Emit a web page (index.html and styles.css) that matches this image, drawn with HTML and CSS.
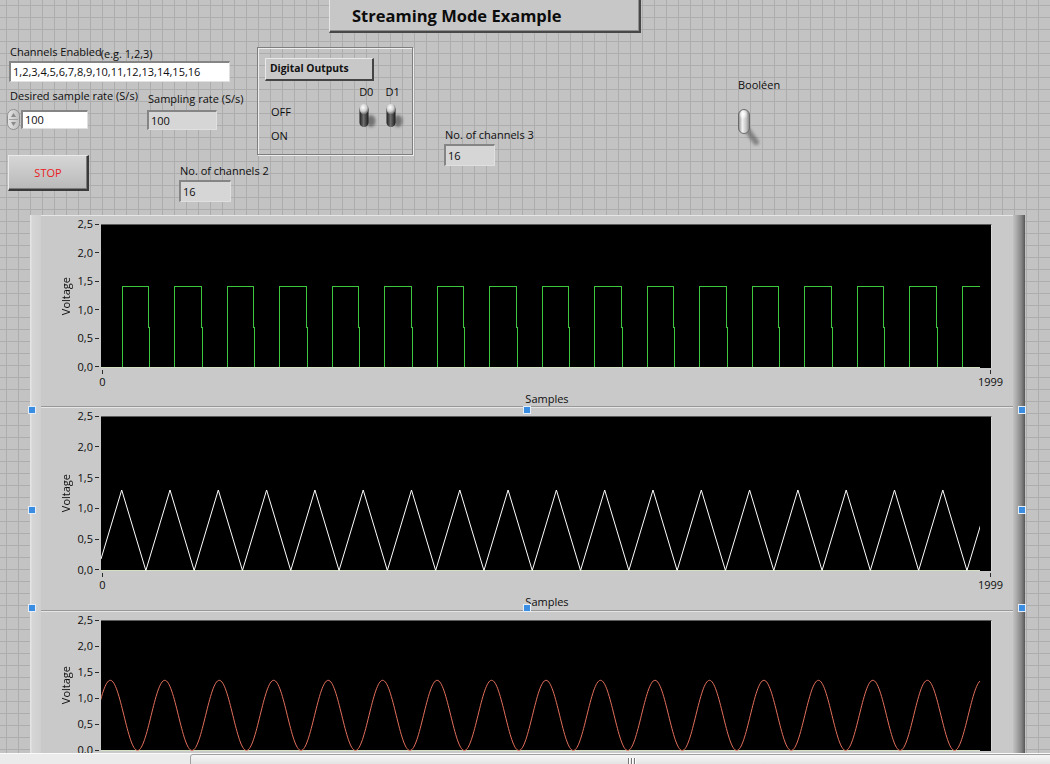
FILE: index.html
```html
<!DOCTYPE html>
<html lang="fr">
<head>
<meta charset="utf-8">
<title>Streaming Mode Example</title>
<link rel="stylesheet" href="styles.css">
</head>
<body>
<div class="window">
  <div class="panel">
    <div class="canvas">
      <svg class="defs" width="0" height="0" aria-hidden="true">
        <defs>
          <linearGradient id="tgBody" x1="0" x2="1" y1="0" y2="0">
            <stop offset="0" stop-color="#1c1c1c"/>
            <stop offset=".45" stop-color="#707070"/>
            <stop offset="1" stop-color="#181818"/>
          </linearGradient>
          <radialGradient id="tgKnob" cx=".4" cy=".35" r=".7">
            <stop offset="0" stop-color="#ffffff"/>
            <stop offset=".55" stop-color="#cfcfcf"/>
            <stop offset="1" stop-color="#5e5e5e"/>
          </radialGradient>
          <linearGradient id="lvBody" x1="0" x2="1" y1="0" y2="0">
            <stop offset="0" stop-color="#8c8c8c"/>
            <stop offset=".35" stop-color="#f2f2f2"/>
            <stop offset=".7" stop-color="#c4c4c4"/>
            <stop offset="1" stop-color="#808080"/>
          </linearGradient>
          <radialGradient id="lvKnob" cx=".45" cy=".4" r=".6">
            <stop offset="0" stop-color="#ffffff"/>
            <stop offset="1" stop-color="#ffffff" stop-opacity="0"/>
          </radialGradient>
          <linearGradient id="spinG" x1="0" x2="1" y1="0" y2="0">
            <stop offset="0" stop-color="#e6e6e6"/>
            <stop offset="1" stop-color="#bdbdbd"/>
          </linearGradient>
          <filter id="blurA" x="-1" y="-1" width="3" height="3"><feGaussianBlur stdDeviation="1.6"/></filter>
        </defs>
      </svg>

      <div class="title">Streaming Mode Example</div>

      <div class="ctl ctl-channels">
        <div class="lbl-row"><span class="lbl">Channels Enabled</span><span class="lbl eg">(e.g. 1,2,3)</span></div>
        <div class="field field-white f-string">1,2,3,4,5,6,7,8,9,10,11,12,13,14,15,16</div>
      </div>

      <div class="ctl ctl-desired">
        <div class="lbl">Desired sample rate (S/s)</div>
        <div class="num-row">
          <svg class="spinner" width="13" height="21" viewBox="0 0 13 21">
            <rect x=".5" y=".5" width="12" height="20" rx="6" fill="url(#spinG)" stroke="#8e8e8e"/>
            <line x1="2" y1="10.5" x2="11" y2="10.5" stroke="#a0a0a0"/>
            <path d="M6.5 4 L9 8 H4 Z" fill="#8a8a8a"/>
            <path d="M6.5 17 L9 13 H4 Z" fill="#8a8a8a"/>
          </svg>
          <div class="field field-white f-num">100</div>
        </div>
      </div>

      <div class="ctl ctl-sampling">
        <div class="lbl">Sampling rate (S/s)</div>
        <div class="field field-ind f-rate">100</div>
      </div>

      <button class="stop" type="button">STOP</button>

      <div class="ctl ctl-ch2">
        <div class="lbl">No. of channels 2</div>
        <div class="field field-ind f-ch">16</div>
      </div>

      <div class="do-frame">
        <div class="do-btn">Digital Outputs</div>
        <div class="do-row">
          <div class="do-states"><span>OFF</span><span class="on">ON</span></div>
          <div class="do-sw">
            <span>D0</span>
            <svg class="toggle" width="20" height="28" viewBox="0 0 20 28">
              <ellipse cx="12" cy="19" rx="4.5" ry="6" fill="#333" opacity=".55" filter="url(#blurA)"/>
              <rect x=".5" y="3" width="9" height="22" rx="4.5" fill="url(#tgBody)"/>
              <ellipse cx="5" cy="7" rx="4.5" ry="5.2" fill="url(#tgKnob)"/>
            </svg>
          </div>
          <div class="do-sw">
            <span>D1</span>
            <svg class="toggle" width="20" height="28" viewBox="0 0 20 28">
              <ellipse cx="12" cy="19" rx="4.5" ry="6" fill="#333" opacity=".55" filter="url(#blurA)"/>
              <rect x=".5" y="3" width="9" height="22" rx="4.5" fill="url(#tgBody)"/>
              <ellipse cx="5" cy="7" rx="4.5" ry="5.2" fill="url(#tgKnob)"/>
            </svg>
          </div>
        </div>
      </div>

      <div class="ctl ctl-ch3">
        <div class="lbl">No. of channels 3</div>
        <div class="field field-ind f-ch f-ch3">16</div>
      </div>

      <div class="ctl ctl-bool">
        <div class="lbl">Booléen</div>
        <svg class="lever" width="26" height="40" viewBox="0 0 26 40">
          <path d="M9 20 L20 35" stroke="#444" stroke-width="6" stroke-linecap="round" opacity=".5" filter="url(#blurA)"/>
          <rect x="2.5" y="2.5" width="11" height="24" rx="5.5" fill="url(#lvBody)" stroke="#6a6a6a"/>
          <ellipse cx="7.5" cy="8" rx="4" ry="4.5" fill="url(#lvKnob)"/>
        </svg>
      </div>
    </div>

    <div class="graphs">
      <div class="g-left"></div>
      <div class="g-stack">
        <div class="graph g1">
          <div class="yaxis">
            <span class="ylabel">Voltage</span>
            <div class="yticks"><span>2,5</span><span>2,0</span><span>1,5</span><span>1,0</span><span>0,5</span><span>0,0</span></div>
          </div>
          <div class="plot">
            <svg width="879" height="143" viewBox="0 0 879 143">
              <path class="tr-sq" d="M0,142.5H21.3
                V61.7h26.4V102h1V142.5h25.1
                V61.7h26.4V102h1V142.5h25.1
                V61.7h26.4V102h1V142.5h25.1
                V61.7h26.4V102h1V142.5h25.1
                V61.7h26.4V102h1V142.5h25.1
                V61.7h26.4V102h1V142.5h25.1
                V61.7h26.4V102h1V142.5h25.1
                V61.7h26.4V102h1V142.5h25.1
                V61.7h26.4V102h1V142.5h25.1
                V61.7h26.4V102h1V142.5h25.1
                V61.7h26.4V102h1V142.5h25.1
                V61.7h26.4V102h1V142.5h25.1
                V61.7h26.4V102h1V142.5h25.1
                V61.7h26.4V102h1V142.5h25.1
                V61.7h26.4V102h1V142.5h25.1
                V61.7h26.4V102h1V142.5h25.1
                V61.7H879"/>
              <line class="zero" x1="0" y1="142.5" x2="879" y2="142.5"/>
            </svg>
          </div>
          <div class="xaxis">
            <div class="xticks"><span class="xt">0</span><span class="xt">1999</span></div>
            <div class="xtitle">Samples</div>
          </div>
        </div>

        <div class="graph g2">
          <div class="yaxis">
            <span class="ylabel">Voltage</span>
            <div class="yticks"><span>2,5</span><span>2,0</span><span>1,5</span><span>1,0</span><span>0,5</span><span>0,0</span></div>
          </div>
          <div class="plot">
            <svg width="879" height="154" viewBox="0 0 879 154">
              <line class="zero" x1="0" y1="153.5" x2="879" y2="153.5"/>
              <path class="tr-tri" d="M0,142L20.7,73
                l24.15,80.5l24.15,-80.5
                l24.15,80.5l24.15,-80.5
                l24.15,80.5l24.15,-80.5
                l24.15,80.5l24.15,-80.5
                l24.15,80.5l24.15,-80.5
                l24.15,80.5l24.15,-80.5
                l24.15,80.5l24.15,-80.5
                l24.15,80.5l24.15,-80.5
                l24.15,80.5l24.15,-80.5
                l24.15,80.5l24.15,-80.5
                l24.15,80.5l24.15,-80.5
                l24.15,80.5l24.15,-80.5
                l24.15,80.5l24.15,-80.5
                l24.15,80.5l24.15,-80.5
                l24.15,80.5l24.15,-80.5
                l24.15,80.5l24.15,-80.5
                l24.15,80.5l24.15,-80.5
                l24.15,80.5l24.15,-80.5"/>
            </svg>
          </div>
          <div class="xaxis">
            <div class="xticks"><span class="xt">0</span><span class="xt">1999</span></div>
            <div class="xtitle">Samples</div>
          </div>
        </div>

        <div class="graph g3">
          <div class="yaxis">
            <span class="ylabel">Voltage</span>
            <div class="yticks"><span>2,5</span><span>2,0</span><span>1,5</span><span>1,0</span><span>0,5</span><span>0,0</span></div>
          </div>
          <div class="plot">
            <svg width="879" height="130" viewBox="0 0 879 130">
              <line class="zero" x1="0" y1="129.5" x2="879" y2="129.5"/>
              <path class="tr-sin" d="M-4.3175,94.4c4.441,-17.98 8.689,-35.1 13.6175,-35.1
                c4.9285,0 9.1765,17.12 13.6175,35.1c4.441,17.98 8.689,35.1 13.6175,35.1c4.9285,0 9.1765,-17.12 13.6175,-35.1c4.441,-17.98 8.689,-35.1 13.6175,-35.1
                c4.9285,0 9.1765,17.12 13.6175,35.1c4.441,17.98 8.689,35.1 13.6175,35.1c4.9285,0 9.1765,-17.12 13.6175,-35.1c4.441,-17.98 8.689,-35.1 13.6175,-35.1
                c4.9285,0 9.1765,17.12 13.6175,35.1c4.441,17.98 8.689,35.1 13.6175,35.1c4.9285,0 9.1765,-17.12 13.6175,-35.1c4.441,-17.98 8.689,-35.1 13.6175,-35.1
                c4.9285,0 9.1765,17.12 13.6175,35.1c4.441,17.98 8.689,35.1 13.6175,35.1c4.9285,0 9.1765,-17.12 13.6175,-35.1c4.441,-17.98 8.689,-35.1 13.6175,-35.1
                c4.9285,0 9.1765,17.12 13.6175,35.1c4.441,17.98 8.689,35.1 13.6175,35.1c4.9285,0 9.1765,-17.12 13.6175,-35.1c4.441,-17.98 8.689,-35.1 13.6175,-35.1
                c4.9285,0 9.1765,17.12 13.6175,35.1c4.441,17.98 8.689,35.1 13.6175,35.1c4.9285,0 9.1765,-17.12 13.6175,-35.1c4.441,-17.98 8.689,-35.1 13.6175,-35.1
                c4.9285,0 9.1765,17.12 13.6175,35.1c4.441,17.98 8.689,35.1 13.6175,35.1c4.9285,0 9.1765,-17.12 13.6175,-35.1c4.441,-17.98 8.689,-35.1 13.6175,-35.1
                c4.9285,0 9.1765,17.12 13.6175,35.1c4.441,17.98 8.689,35.1 13.6175,35.1c4.9285,0 9.1765,-17.12 13.6175,-35.1c4.441,-17.98 8.689,-35.1 13.6175,-35.1
                c4.9285,0 9.1765,17.12 13.6175,35.1c4.441,17.98 8.689,35.1 13.6175,35.1c4.9285,0 9.1765,-17.12 13.6175,-35.1c4.441,-17.98 8.689,-35.1 13.6175,-35.1
                c4.9285,0 9.1765,17.12 13.6175,35.1c4.441,17.98 8.689,35.1 13.6175,35.1c4.9285,0 9.1765,-17.12 13.6175,-35.1c4.441,-17.98 8.689,-35.1 13.6175,-35.1
                c4.9285,0 9.1765,17.12 13.6175,35.1c4.441,17.98 8.689,35.1 13.6175,35.1c4.9285,0 9.1765,-17.12 13.6175,-35.1c4.441,-17.98 8.689,-35.1 13.6175,-35.1
                c4.9285,0 9.1765,17.12 13.6175,35.1c4.441,17.98 8.689,35.1 13.6175,35.1c4.9285,0 9.1765,-17.12 13.6175,-35.1c4.441,-17.98 8.689,-35.1 13.6175,-35.1
                c4.9285,0 9.1765,17.12 13.6175,35.1c4.441,17.98 8.689,35.1 13.6175,35.1c4.9285,0 9.1765,-17.12 13.6175,-35.1c4.441,-17.98 8.689,-35.1 13.6175,-35.1
                c4.9285,0 9.1765,17.12 13.6175,35.1c4.441,17.98 8.689,35.1 13.6175,35.1c4.9285,0 9.1765,-17.12 13.6175,-35.1c4.441,-17.98 8.689,-35.1 13.6175,-35.1
                c4.9285,0 9.1765,17.12 13.6175,35.1c4.441,17.98 8.689,35.1 13.6175,35.1c4.9285,0 9.1765,-17.12 13.6175,-35.1c4.441,-17.98 8.689,-35.1 13.6175,-35.1
                c4.9285,0 9.1765,17.12 13.6175,35.1c4.441,17.98 8.689,35.1 13.6175,35.1c4.9285,0 9.1765,-17.12 13.6175,-35.1c4.441,-17.98 8.689,-35.1 13.6175,-35.1
                c4.9285,0 9.1765,17.12 13.6175,35.1c4.441,17.98 8.689,35.1 13.6175,35.1c4.9285,0 9.1765,-17.12 13.6175,-35.1c4.441,-17.98 8.689,-35.1 13.6175,-35.1"/>
            </svg>
          </div>
        </div>
      </div>
      <div class="g-bevel"></div>
    </div>

    <span class="handle h-tl"></span>
    <span class="handle h-tc"></span>
    <span class="handle h-tr"></span>
    <span class="handle h-ml"></span>
    <span class="handle h-mr"></span>
    <span class="handle h-bl"></span>
    <span class="handle h-bc"></span>
    <span class="handle h-br"></span>
  </div>

  <div class="hscroll">
    <div class="thumb"><i></i><i></i><i></i></div>
  </div>
</div>
</body>
</html>
```

FILE: styles.css
```css
* { box-sizing: border-box; }

html, body {
  margin: 0;
  padding: 0;
}

body {
  width: 1050px;
  height: 764px;
  overflow: hidden;
  background: #c3c3c3;
  font-family: "Open Sans", "Liberation Sans", sans-serif;
  font-size: 11px;
  line-height: 15px;
  color: #0e0e0e;
}

.panel {
  position: relative;
  height: 753px;
  overflow: hidden;
  background-color: #c3c3c3;
  background-image:
    linear-gradient(#adadad 1px, transparent 1px),
    linear-gradient(90deg, #adadad 1px, transparent 1px);
  background-size: 12px 12px;
  background-position: 6px 5px;
}

/* ---------- front panel canvas ---------- */
.canvas {
  position: relative;
  height: 215px;
}

.defs {
  display: block;
  width: 0;
  height: 0;
}

.title {
  position: absolute;
  left: 329px;
  top: 0;
  width: 312px;
  height: 33px;
  padding-left: 22px;
  background: #c7c7c7;
  border-left: 1px solid #e6e6e6;
  border-right: 2px solid #474747;
  border-bottom: 2px solid #474747;
  box-shadow: inset -1px -1px 0 #8e8e8e;
  font-weight: 700;
  font-size: 16.5px;
  line-height: 31px;
  color: #0c0c0c;
}

.ctl {
  position: absolute;
  display: flex;
  flex-direction: column;
  align-items: flex-start;
}

.lbl { padding-left: 1px; white-space: nowrap; }

.lbl-row { display: flex; }
.eg { margin-top: 2px; margin-left: -1px; padding-left: 0; }

.ctl-channels { left: 9px; top: 44px; }
.ctl-desired { left: 7px; top: 88px; }
.ctl-desired .lbl { padding-left: 3px; }
.ctl-desired .num-row { margin-top: 6px; }
.ctl-sampling { left: 147px; top: 91px; }
.ctl-sampling .f-rate { margin-top: 4px; }
.ctl-ch2 { left: 179px; top: 163px; }
.ctl-ch3 { left: 444px; top: 127px; }
.ctl-bool { left: 736px; top: 77px; }
.ctl-bool .lbl { padding-left: 2px; }

.field {
  border-top: 2px solid #858585;
  border-left: 2px solid #858585;
  border-right: 1px solid #e0e0e0;
  border-bottom: 1px solid #e0e0e0;
  padding-left: 2px;
  white-space: nowrap;
  color: #0e0e0e;
}

.field-white { background: #ffffff; }
.field-ind { background: #d6d6d6; }

.f-string {
  width: 221px;
  height: 21px;
  line-height: 17px;
}

.num-row {
  display: flex;
  align-items: flex-start;
}

.spinner { display: block; }

.f-num {
  width: 67px;
  height: 19px;
  margin-top: 1px;
  margin-left: 1px;
  line-height: 16px;
}

.f-rate {
  width: 70px;
  height: 20px;
  line-height: 17px;
}

.f-ch {
  width: 52px;
  height: 22px;
  margin-top: 2px;
  line-height: 19px;
}

.f-ch3 { width: 51px; }

.stop {
  position: absolute;
  left: 8px;
  top: 155px;
  width: 81px;
  height: 36px;
  padding: 0;
  font: inherit;
  color: #ea1c22;
  background: linear-gradient(#d6d6d6, #c6c6c6 55%, #b9b9b9);
  border-style: solid;
  border-width: 1px 2px 2px 1px;
  border-color: #eaeaea #3a3a3a #3a3a3a #eaeaea;
  box-shadow: inset -1px -1px 0 #7c7c7c;
}

/* digital outputs cluster */
.do-frame {
  position: absolute;
  left: 257px;
  top: 47px;
  width: 156px;
  height: 108px;
  padding: 10px 0 0 7px;
  border: 1px solid #7e7e7e;
  box-shadow: 1px 1px 0 #ededed, inset 1px 1px 0 #ededed;
}

.do-btn {
  width: 109px;
  height: 23px;
  padding-left: 4px;
  background: #c8c8c8;
  border-style: solid;
  border-width: 1px 2px 2px 1px;
  border-color: #e8e8e8 #444 #444 #e8e8e8;
  font-weight: 700;
  font-size: 10.3px;
  line-height: 19px;
  color: #111;
}

.do-row {
  display: flex;
  margin-top: 3px;
}

.do-states {
  display: flex;
  flex-direction: column;
  width: 90px;
  margin-left: 6px;
  padding-top: 20px;
}

.do-states .on { margin-top: 9px; }

.do-sw {
  display: flex;
  flex-direction: column;
  width: 27px;
}

.toggle {
  display: block;
  margin-top: 3px;
}

.lever {
  display: block;
  margin-top: 15px;
}

/* ---------- graphs ---------- */
.graphs {
  display: flex;
  margin-left: 30px;
  width: 995px;
}

.g-left {
  width: 11px;
  background: linear-gradient(90deg, #e4e4e4 0, #e4e4e4 1px, #d6d6d6 2px, #cfcfcf 100%);
}

.g-stack {
  width: 972px;
  background: #c9c9c9;
}

.g-bevel {
  width: 12px;
  background: linear-gradient(90deg, #c2c2c2, #a6a6a6 35%, #858585 70%, #646464 92%, #555 100%);
}

.graph {
  display: grid;
  grid-template-columns: 60px 891px 21px;
  grid-template-rows: 8px auto 1fr;
  border-top: 1px solid #e6e6e6;
  border-bottom: 1px solid #979797;
}

.g1 { height: 192px; }
.g2 { height: 204px; }
.g3 { height: 204px; }

.yaxis {
  grid-column: 1;
  grid-row: 2;
  display: flex;
  justify-content: flex-end;
  align-items: center;
}

.ylabel {
  writing-mode: vertical-rl;
  transform: rotate(180deg);
  line-height: 15px;
  margin-right: 5px;
}

.yticks {
  align-self: stretch;
  margin: -6px 0 -5px;
  padding-right: 2px;
  display: flex;
  flex-direction: column;
  justify-content: space-between;
}

.yticks span {
  display: flex;
  align-items: center;
  justify-content: flex-end;
  height: 12px;
  line-height: 12px;
}

.yticks span::after {
  content: "";
  width: 4px;
  height: 1px;
  margin-left: 2px;
  background: #2a2a2a;
}

.plot {
  grid-column: 2;
  grid-row: 2;
  background: #000;
  border-top: 1px solid #5c5c5c;
  border-right: 1px solid #d8d8d8;
}

.g1 .plot { height: 144px; }
.g2 .plot { height: 155px; }
.g3 .plot { height: 131px; }

.plot svg { display: block; }

.zero { stroke: #d3dfc3; stroke-width: 1; }

.tr-sq {
  fill: none;
  stroke: #3fc63f;
  stroke-width: 1;
  shape-rendering: crispEdges;
}

.tr-tri {
  fill: none;
  stroke: #ffffff;
  stroke-width: 1;
}

.tr-sin {
  fill: none;
  stroke: #e4705c;
  stroke-width: 1;
}

.xaxis {
  grid-column: 2 / 4;
  grid-row: 3;
}

.xticks {
  display: flex;
  justify-content: space-between;
  margin-left: -19px;
  width: 929px;
}

.xt {
  width: 41px;
  display: flex;
  flex-direction: column;
  align-items: center;
}

.xt::before {
  content: "";
  width: 1px;
  height: 4px;
  margin-top: 2px;
  background: #2a2a2a;
}

.xtitle {
  width: 892px;
  margin-top: 2px;
  text-align: center;
}

/* selection handles (overlay) */
.handle {
  position: absolute;
  width: 8px;
  height: 8px;
  background: #3b8de2;
  border: 1px solid #e4eefa;
}

.h-tl { left: 28px; top: 406px; }
.h-tc { left: 523px; top: 406px; }
.h-tr { left: 1018px; top: 406px; }
.h-ml { left: 28px; top: 506px; }
.h-mr { left: 1018px; top: 506px; }
.h-bl { left: 28px; top: 604px; }
.h-bc { left: 523px; top: 604px; }
.h-br { left: 1018px; top: 604px; }

/* window scrollbar */
.hscroll {
  height: 17px;
  background: #ebebeb;
  border-top: 1px solid #fafafa;
}

.thumb {
  margin-left: 190px;
  width: 882px;
  height: 15px;
  border: 1px solid #a0a0a0;
  border-radius: 3px;
  background: linear-gradient(#f6f6f6, #e9e9e9 50%, #dadada);
  display: flex;
  justify-content: center;
  align-items: center;
  gap: 2px;
}

.thumb i {
  width: 1px;
  height: 7px;
  background: #777;
  box-shadow: 1px 0 0 #fff;
}
```
